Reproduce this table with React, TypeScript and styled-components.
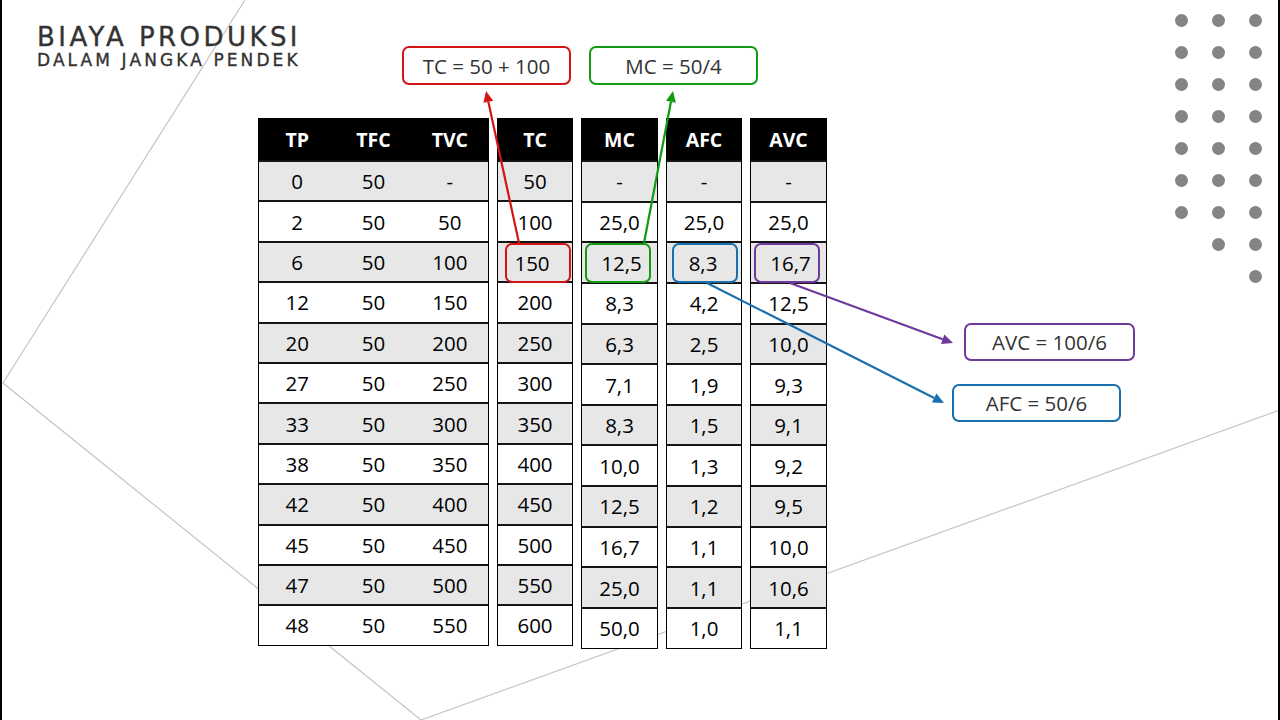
import React from 'react'
import styled, { createGlobalStyle } from 'styled-components'

const GlobalStyle = createGlobalStyle`
  body {
    margin: 0;
    background: #ffffff;
    font-family: "Open Sans", "Liberation Sans", sans-serif;
  }
`

const Page = styled.div`
  position: relative;
  width: 1280px;
  height: 720px;
  box-sizing: border-box;
  border-left: 2px solid #000;
  border-right: 2px solid #000;
  background: #fff;
  overflow: hidden;
  display: flex;
`

const Overlay = styled.svg<{ $top?: boolean }>`
  position: absolute;
  top: 0;
  left: -2px;
  width: 1280px;
  height: 720px;
  pointer-events: none;
  z-index: ${(p) => (p.$top ? 3 : 0)};
`

const Main = styled.div`
  position: relative;
  z-index: 1;
  flex: 1;
  min-width: 0;
  padding-left: 35px;
  display: flex;
  flex-direction: column;
`

const TopRow = styled.div`
  display: flex;
  align-items: flex-start;
`

const TitleBlock = styled.div`
  flex: none;
  width: 365px;
  padding-top: 25px;
  color: #333;
  font-family: "DejaVu Sans", sans-serif;
  -webkit-text-stroke: 0.35px #333;
`

const Title = styled.div`
  font-size: 26px;
  line-height: 24px;
  letter-spacing: 3.45px;
  white-space: nowrap;
`

const Subtitle = styled.div`
  margin-top: 3.5px;
  font-size: 17px;
  line-height: 14px;
  letter-spacing: 3.1px;
  white-space: nowrap;
`

const Callouts = styled.div`
  display: flex;
  gap: 18px;
  margin-top: 46px;
`

const Callout = styled.div<{ $color: string; $w?: number; $h?: number; $shift?: number; $gap?: number }>`
  width: ${(p) => p.$w ?? 169}px;
  height: ${(p) => p.$h ?? 39}px;
  margin-left: ${(p) => p.$shift ?? 0}px;
  margin-top: ${(p) => p.$gap ?? 0}px;
  box-sizing: border-box;
  border: 2.5px solid ${(p) => p.$color};
  border-radius: 7px;
  background: #fff;
  display: flex;
  align-items: center;
  justify-content: center;
  font-size: 20.5px;
  color: #333;
`

const TablesRow = styled.div`
  display: flex;
  align-items: flex-start;
  gap: 8px;
  margin-top: 33px;
  margin-left: 221px;
`

const SideNotes = styled.div`
  display: flex;
  flex-direction: column;
  align-items: flex-start;
  margin-left: 129px;
  margin-top: 205px;
`

const Table = styled.div<{ $w: number }>`
  width: ${(p) => p.$w}px;
  box-sizing: border-box;
  border: 1px solid #000;
  background: #fff;
`

const HeadRow = styled.div<{ $cols: number }>`
  display: grid;
  grid-template-columns: repeat(${(p) => p.$cols}, 1fr);
  height: 41px;
  background: #000;
  color: #fff;
  font-weight: 700;
  font-size: 19.5px;
`

const BodyRow = styled.div<{ $cols: number; $h: number; $shade: boolean }>`
  display: grid;
  grid-template-columns: repeat(${(p) => p.$cols}, 1fr);
  height: ${(p) => p.$h}px;
  box-sizing: border-box;
  border-top: 2px solid #151515;
  background: ${(p) => (p.$shade ? '#e7e7e7' : '#fff')};
  font-size: 20.5px;
  color: #000;
`

const Cell = styled.div`
  display: flex;
  align-items: center;
  justify-content: center;
`

const Mark = styled.span<{ $color: string; $dx: number }>`
  flex: none;
  width: 66px;
  height: 40px;
  margin-left: ${(p) => p.$dx}px;
  padding-left: ${(p) => (p.$dx < 0 ? -2 * p.$dx : 0)}px;
  padding-right: ${(p) => (p.$dx > 0 ? 2 * p.$dx : 0)}px;
  box-sizing: border-box;
  border: 2.5px solid ${(p) => p.$color};
  border-radius: 7px;
  display: flex;
  align-items: center;
  justify-content: center;
`

const DotGrid = styled.div`
  position: relative;
  z-index: 1;
  flex: none;
  display: grid;
  grid-template-columns: repeat(3, 13px);
  grid-auto-rows: 13px;
  column-gap: 24px;
  row-gap: 19px;
  margin-top: 13.5px;
  margin-right: 16px;
  align-self: flex-start;
`

const Dot = styled.span<{ $off: boolean }>`
  width: 13px;
  height: 13px;
  border-radius: 50%;
  background: #848484;
  visibility: ${(p) => (p.$off ? 'hidden' : 'visible')};
`

const RED = '#d41515'
const GREEN = '#129a12'
const BLUE = '#1a6fae'
const PURPLE = '#6e3a9c'

type TableProps = {
  width: number
  heads: string[]
  rows: string[][]
  rowHeight: number
  mark?: { row: number; color: string; dx: number }
}

const DataTable = ({ width, heads, rows, rowHeight, mark }: TableProps) => (
  <Table $w={width}>
    <HeadRow $cols={heads.length}>
      {heads.map((h) => (
        <Cell key={h}>{h}</Cell>
      ))}
    </HeadRow>
    {rows.map((r, i) => (
      <BodyRow key={i} $cols={heads.length} $h={rowHeight} $shade={i % 2 === 0}>
        {r.map((v, j) => (
          <Cell key={j}>
            {mark && mark.row === i ? (
              <Mark $color={mark.color} $dx={mark.dx}>
                {v}
              </Mark>
            ) : (
              v
            )}
          </Cell>
        ))}
      </BodyRow>
    ))}
  </Table>
)

const Arrow = ({ x1, y1, x2, y2, color }: { x1: number; y1: number; x2: number; y2: number; color: string }) => {
  const a = Math.atan2(y2 - y1, x2 - x1)
  const len = 11
  const half = 5
  const bx = x2 - len * Math.cos(a)
  const by = y2 - len * Math.sin(a)
  const px = -Math.sin(a) * half
  const py = Math.cos(a) * half
  return (
    <g>
      <line x1={x1} y1={y1} x2={bx} y2={by} stroke={color} strokeWidth={2.2} />
      <polygon points={`${x2},${y2} ${bx + px},${by + py} ${bx - px},${by - py}`} fill={color} />
    </g>
  )
}

const tp = ['0', '2', '6', '12', '20', '27', '33', '38', '42', '45', '47', '48']
const tvc = ['-', '50', '100', '150', '200', '250', '300', '350', '400', '450', '500', '550']
const tc = ['50', '100', '150', '200', '250', '300', '350', '400', '450', '500', '550', '600']
const mc = ['-', '25,0', '12,5', '8,3', '6,3', '7,1', '8,3', '10,0', '12,5', '16,7', '25,0', '50,0']
const afc = ['-', '25,0', '8,3', '4,2', '2,5', '1,9', '1,5', '1,3', '1,2', '1,1', '1,1', '1,0']
const avc = ['-', '25,0', '16,7', '12,5', '10,0', '9,3', '9,1', '9,2', '9,5', '10,0', '10,6', '1,1']

const firstRows = tp.map((v, i) => [v, '50', tvc[i]])
const single = (list: string[]) => list.map((v) => [v])

const dotCols = [7, 8, 9]

const App = () => (
  <Page>
    <GlobalStyle />
    <Overlay viewBox="0 0 1280 720">
      <polyline points="245,0 3,383 421,720 1280,410" fill="none" stroke="#c4c4c4" strokeWidth={1.2} />
    </Overlay>

    <Main>
      <TopRow>
        <TitleBlock>
          <Title>BIAYA PRODUKSI</Title>
          <Subtitle>DALAM JANGKA PENDEK</Subtitle>
        </TitleBlock>
        <Callouts>
          <Callout $color={RED}>TC = 50 + 100</Callout>
          <Callout $color={GREEN}>MC = 50/4</Callout>
        </Callouts>
      </TopRow>

      <TablesRow>
        <DataTable width={231} heads={['TP', 'TFC', 'TVC']} rows={firstRows} rowHeight={40.4} />
        <DataTable width={76} heads={['TC']} rows={single(tc)} rowHeight={40.4} mark={{ row: 2, color: RED, dx: 6 }} />
        <DataTable width={77} heads={['MC']} rows={single(mc)} rowHeight={40.65} mark={{ row: 2, color: GREEN, dx: -4 }} />
        <DataTable width={76} heads={['AFC']} rows={single(afc)} rowHeight={40.65} mark={{ row: 2, color: BLUE, dx: 2 }} />
        <DataTable width={77} heads={['AVC']} rows={single(avc)} rowHeight={40.65} mark={{ row: 2, color: PURPLE, dx: -4 }} />
        <SideNotes>
          <Callout $color={PURPLE} $w={171} $h={38}>AVC = 100/6</Callout>
          <Callout $color={BLUE} $h={38} $shift={-12} $gap={23}>AFC = 50/6</Callout>
        </SideNotes>
      </TablesRow>
    </Main>

    <DotGrid>
      {Array.from({ length: 27 }, (_, k) => {
        const row = Math.floor(k / 3)
        const col = k % 3
        return <Dot key={k} $off={row >= dotCols[col]} />
      })}
    </DotGrid>

    <Overlay $top viewBox="0 0 1280 720">
      <Arrow x1={519} y1={243} x2={486} y2={91} color={RED} />
      <Arrow x1={644} y1={243} x2={673} y2={91} color={GREEN} />
      <Arrow x1={790} y1={283} x2={953} y2={343} color={PURPLE} />
      <Arrow x1={707} y1={283} x2={944} y2={403} color={BLUE} />
    </Overlay>
  </Page>
)

export default App
